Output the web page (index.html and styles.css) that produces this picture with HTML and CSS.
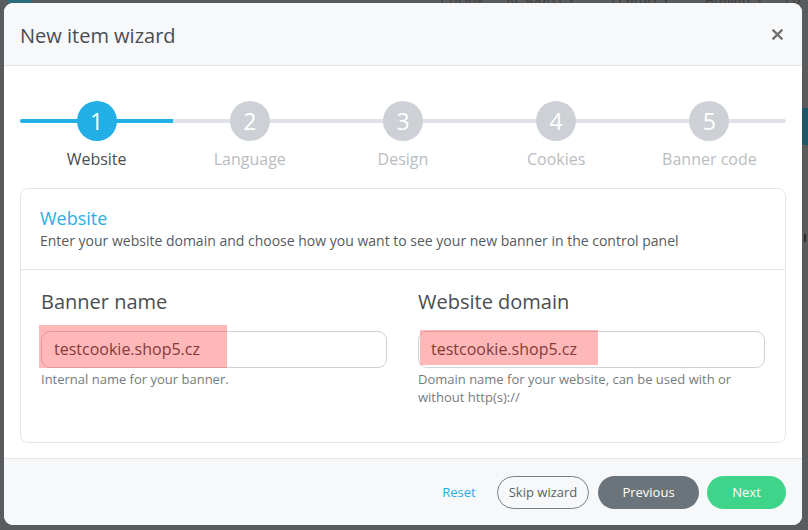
FILE: index.html
```html
<!DOCTYPE html>
<html lang="en">
<head>
<meta charset="utf-8">
<title>New item wizard</title>
<link rel="stylesheet" href="styles.css">
</head>
<body>
<div class="backdrop">
  <div class="bg-nav">
    <span class="bg-link l1">Pricing</span>
    <span class="bg-link l2">Resources</span>
    <span class="bg-link l3">Features</span>
    <span class="bg-link l4">Affiliates</span>
    <span class="bg-link l5">Lo</span>
  </div>
  <div class="bg-teal-top"></div>
  <div class="bg-teal-right"></div>
  <div class="bg-mark-right"></div>

  <div class="modal">
    <div class="modal-header">
      <h1 class="modal-title">New item wizard</h1>
      <button class="close" aria-label="Close">
        <svg width="11" height="11" viewBox="0 0 11 11"><path d="M1.5 1.5 L9.5 9.5 M9.5 1.5 L1.5 9.5" stroke="#6f6f6f" stroke-width="2.4" stroke-linecap="square"/></svg>
      </button>
    </div>

    <div class="modal-body">
      <div class="stepper">
        <div class="step done active">
          <div class="step-dot">1</div>
          <div class="step-label">Website</div>
        </div>
        <div class="step">
          <div class="step-dot">2</div>
          <div class="step-label">Language</div>
        </div>
        <div class="step">
          <div class="step-dot">3</div>
          <div class="step-label">Design</div>
        </div>
        <div class="step">
          <div class="step-dot">4</div>
          <div class="step-label">Cookies</div>
        </div>
        <div class="step">
          <div class="step-dot">5</div>
          <div class="step-label">Banner code</div>
        </div>
      </div>

      <div class="card">
        <div class="card-header">
          <h2 class="card-title">Website</h2>
          <p class="card-sub">Enter your website domain and choose how you want to see your new banner in the control panel</p>
        </div>
        <div class="card-body">
          <div class="field">
            <label class="field-label">Banner name</label>
            <div class="input-wrap">
              <div class="input">testcookie.shop5.cz</div>
              <span class="redact redact-left"></span>
            </div>
            <div class="help">Internal name for your banner.</div>
          </div>
          <div class="field">
            <label class="field-label">Website domain</label>
            <div class="input-wrap">
              <div class="input">testcookie.shop5.cz</div>
              <span class="redact redact-right"></span>
            </div>
            <div class="help">Domain name for your website, can be used with or without http(s)://</div>
          </div>
        </div>
      </div>
    </div>

    <div class="modal-footer">
      <button class="btn btn-link">Reset</button>
      <button class="btn btn-outline">Skip wizard</button>
      <button class="btn btn-secondary">Previous</button>
      <button class="btn btn-success">Next</button>
    </div>
  </div>
</div>
</body>
</html>
```

FILE: styles.css
```css
* { box-sizing: border-box; }

html, body {
  margin: 0;
  padding: 0;
  width: 808px;
  height: 530px;
  overflow: hidden;
}

body {
  font-family: "Open Sans", "Noto Sans", sans-serif;
  background: #5a5b5c;
}

.backdrop {
  position: relative;
  width: 808px;
  height: 530px;
  padding: 3px 6px 5px 4px;
  background: #5a5b5c;
}

.bg-nav {
  position: absolute;
  top: -11px;
  left: 0;
  width: 808px;
  height: 14px;
  font-size: 14px;
  color: #3c3d3e;
}
.bg-link { position: absolute; top: 0; }
.l1 { left: 440px; }
.l2 { left: 506px; }
.l3 { left: 611px; }
.l4 { left: 705px; }
.l5 { left: 785px; }

.bg-teal-top {
  position: absolute;
  top: 0;
  left: 8px;
  width: 24px;
  height: 3px;
  background: #2c6b7a;
}
.bg-teal-right {
  position: absolute;
  top: 108px;
  left: 802px;
  width: 6px;
  height: 37px;
  background: #1f5766;
}
.bg-mark-right {
  position: absolute;
  top: 234px;
  left: 804px;
  width: 2px;
  height: 8px;
  background: #2e2e2e;
}

.modal {
  position: relative;
  width: 798px;
  height: 522px;
  background: #fff;
  border-radius: 9px;
  overflow: hidden;
  display: flex;
  flex-direction: column;
}

.modal-header {
  height: 63px;
  background: #f7f8fa;
  border-bottom: 1px solid #e4e6ea;
  display: flex;
  align-items: center;
  justify-content: space-between;
  padding: 0 19px 0 16px;
  flex: none;
}

.modal-title {
  margin: 0;
  font-size: 20px;
  font-weight: 400;
  color: #4a4d51;
  line-height: 27px;
  padding-top: 2px;
}

.close {
  background: none;
  border: 0;
  padding: 0;
  width: 11px;
  height: 11px;
  display: flex;
}

.modal-body {
  flex: 1;
  min-height: 0;
  padding: 35px 16px 15px 16px;
}

.stepper {
  display: grid;
  grid-template-columns: repeat(5, 1fr);
  margin: 0 0 18px 0;
}

.step {
  position: relative;
  display: flex;
  flex-direction: column;
  align-items: center;
}
.step::before {
  content: "";
  position: absolute;
  left: 0;
  right: 0;
  top: 18px;
  height: 4px;
  background: #dfe2e6;
}
.step.active::before {
  background: #21afe5;
  border-radius: 2px 0 0 2px;
}
.step:last-child::before { border-radius: 0 2px 2px 0; }

.step-dot {
  position: relative;
  width: 40px;
  height: 40px;
  border-radius: 50%;
  background: #cdd1d6;
  color: #fff;
  font-size: 23px;
  line-height: 40px;
  text-align: center;
}
.step.active .step-dot { background: #21afe5; }

.step-label {
  margin-top: 7px;
  font-size: 16px;
  line-height: 22px;
  color: #b9bdc2;
}
.step.active .step-label { color: #4a4d51; }

.card {
  border: 1px solid #e3e6e9;
  border-radius: 8px;
  background: #fff;
}

.card-header {
  padding: 17px 19px 18px 19px;
  border-bottom: 1px solid #e3e6e9;
}

.card-title {
  margin: 0;
  font-size: 18px;
  font-weight: 400;
  line-height: 25px;
  color: #2aaee0;
}

.card-sub {
  margin: 0;
  font-size: 14px;
  line-height: 20px;
  color: #555a5f;
}

.card-body {
  display: grid;
  grid-template-columns: 346px 347px;
  column-gap: 31px;
  padding: 18px 19px 36px 20px;
}

.field { display: flex; flex-direction: column; }

.field-label {
  font-size: 20px;
  line-height: 27px;
  color: #4a4d51;
  margin-bottom: 16px;
}

.input-wrap { position: relative; }

.input {
  height: 37px;
  border: 1px solid #cfd3d7;
  border-radius: 9px;
  padding: 0 12px;
  font-size: 16px;
  line-height: 35px;
  color: #444;
  background: #fff;
}

.redact {
  position: absolute;
  background: rgba(255, 40, 40, 0.33);
}
.redact-left { left: -2px; top: -6px; width: 188px; height: 43px; }
.redact-right { left: 2px; top: -1px; width: 178px; height: 35px; }

.help {
  margin-top: 2px;
  font-size: 13px;
  line-height: 18px;
  color: #767b80;
}

.modal-footer {
  flex: none;
  height: 67px;
  background: #f7f8fa;
  border-top: 1px solid #e4e6ea;
  display: flex;
  align-items: center;
  justify-content: flex-end;
  padding: 0 16px 0 0;
  gap: 8px;
}

.btn {
  font-family: "Open Sans", "Noto Sans", sans-serif;
  font-size: 13px;
  height: 33px;
  border-radius: 17px;
  border: 1px solid transparent;
  padding: 0;
  line-height: 31px;
  text-align: center;
  cursor: pointer;
}

.btn-link {
  background: none;
  color: #2aaee0;
  width: 44px;
  margin-right: 8px;
}

.btn-outline {
  background: transparent;
  border-color: #7a7f84;
  color: #5b6066;
  width: 92px;
  margin-right: 1px;
}

.btn-secondary {
  background: #6b737b;
  color: #fff;
  width: 101px;
}

.btn-success {
  background: #3ed48a;
  color: #fff;
  width: 79px;
}
```
